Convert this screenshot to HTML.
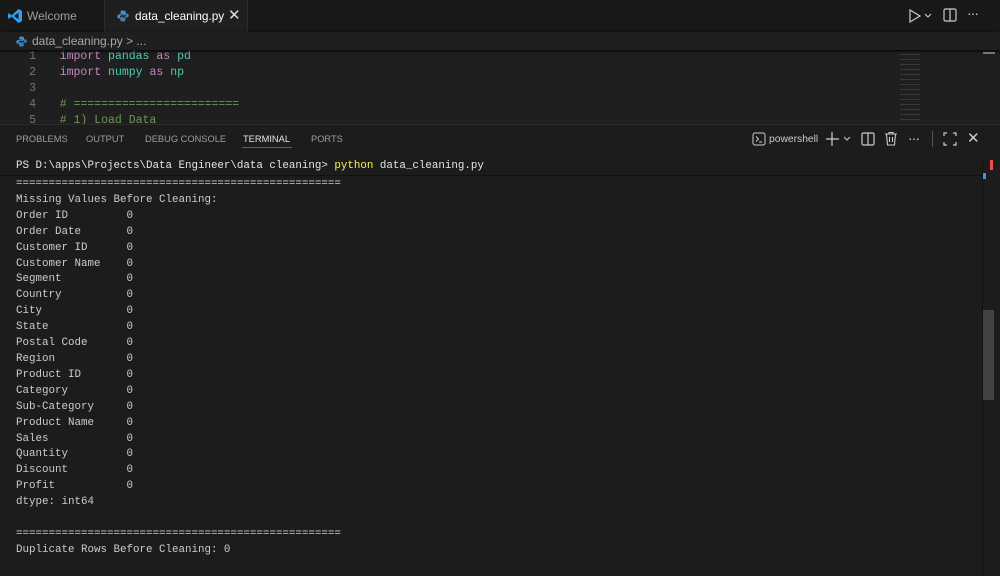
<!DOCTYPE html>
<html><head><style>
*{margin:0;padding:0;box-sizing:border-box}
body{width:1000px;height:576px;background:#1f1f1f;overflow:hidden;position:relative;font-family:"Liberation Sans",sans-serif;color:#ccc}
.abs{position:absolute}
.mono{font-family:"Liberation Mono",monospace;white-space:pre}
.pt{position:absolute;top:134px;font-size:9.3px;color:#9d9d9d}
.ln{display:inline-block;width:36px;text-align:right;margin-right:3px}
</style></head><body>
<!-- tab bar -->
<div class="abs" style="left:0;top:0;width:1000px;height:33px;background:#181818;border-bottom:1px solid #2b2b2b"></div>
<div class="abs" style="left:0;top:0;width:105px;height:33px;border-right:1px solid #2b2b2b"></div>
<svg class="abs" style="left:7px;top:8px" width="16" height="16" viewBox="0 0 16 16"><path d="M11.5 1 L15 2.7 V13.3 L11.5 15 L4.5 8.6 L1.8 10.7 L1 10.2 V5.8 L1.8 5.3 L4.5 7.4 Z M11.5 4.6 L7 8 L11.5 11.4 Z" fill="#2f9ef0"/></svg>
<div class="abs" style="left:27px;top:9px;font-size:12px;color:#9d9d9d">Welcome</div>
<div class="abs" style="left:105px;top:0;width:143px;height:34px;background:#1f1f1f;border-right:1px solid #2b2b2b"></div>
<svg class="abs" style="left:117px;top:10px" width="12" height="12" viewBox="0 0 12 12"><path d="M6 0.5C3.5 0.5 3.5 1.6 3.5 2.5V4H6.5V4.5H2C0.8 4.5 0.3 5.5 0.3 6.5 0.3 7.8 1 8.5 2 8.5H3V7C3 6 3.8 5.3 4.8 5.3H7.5C8.2 5.3 8.8 4.7 8.8 4V2.5C8.8 1.3 7.8 0.5 6 0.5Z" fill="#4a8fc7"/><path d="M6 11.5C8.5 11.5 8.5 10.4 8.5 9.5V8H5.5V7.5H10C11.2 7.5 11.7 6.5 11.7 5.5 11.7 4.2 11 3.5 10 3.5H9V5C9 6 8.2 6.7 7.2 6.7H4.5C3.8 6.7 3.2 7.3 3.2 8V9.5C3.2 10.7 4.2 11.5 6 11.5Z" fill="#4a8fc7" opacity=".85"/></svg>
<div class="abs" style="left:135px;top:9px;font-size:11.8px;color:#fff">data_cleaning.py</div>
<div class="abs" style="left:228px;top:6px;font-size:15px;color:#ddd">✕</div>
<svg class="abs" style="left:907px;top:8px" width="30" height="16" viewBox="0 0 30 16"><path d="M3 2 L13 8 L3 14 Z" fill="none" stroke="#ccc" stroke-width="1.2"/><path d="M18 6 L21 9 L24 6" fill="none" stroke="#ccc" stroke-width="1.1"/></svg>
<svg class="abs" style="left:943px;top:8px" width="14" height="14" viewBox="0 0 14 14"><rect x="1" y="1" width="12" height="12" rx="1.5" fill="none" stroke="#ccc" stroke-width="1.2"/><path d="M7 1V13" stroke="#ccc" stroke-width="1.2"/></svg>
<div class="abs" style="left:967px;top:5px;font-size:14px;color:#ccc;letter-spacing:-1px">···</div>
<!-- code -->
<div class="abs mono" style="left:0;top:49px;font-size:11.5px;line-height:16px;color:#6e7681;height:75px;overflow:hidden"><div><span class="ln">1</span>   <span style="color:#c586c0">import</span> <span style="color:#4ec9b0">pandas</span> <span style="color:#c586c0">as</span> <span style="color:#4ec9b0">pd</span></div><div><span class="ln">2</span>   <span style="color:#c586c0">import</span> <span style="color:#4ec9b0">numpy</span> <span style="color:#c586c0">as</span> <span style="color:#4ec9b0">np</span></div><div><span class="ln">3</span></div><div><span class="ln">4</span>   <span style="color:#6a9955"># ========================</span></div><div><span class="ln">5</span>   <span style="color:#6a9955"># 1) Load Data</span></div></div>
<div class="abs" style="left:0;top:32px;width:1000px;height:18px;background:#1f1f1f;box-shadow:0 1px 3px #000"></div>
<svg class="abs" style="left:16px;top:36px" width="11" height="11" viewBox="0 0 12 12"><path d="M6 0.5C3.5 0.5 3.5 1.6 3.5 2.5V4H6.5V4.5H2C0.8 4.5 0.3 5.5 0.3 6.5 0.3 7.8 1 8.5 2 8.5H3V7C3 6 3.8 5.3 4.8 5.3H7.5C8.2 5.3 8.8 4.7 8.8 4V2.5C8.8 1.3 7.8 0.5 6 0.5Z" fill="#4a8fc7"/><path d="M6 11.5C8.5 11.5 8.5 10.4 8.5 9.5V8H5.5V7.5H10C11.2 7.5 11.7 6.5 11.7 5.5 11.7 4.2 11 3.5 10 3.5H9V5C9 6 8.2 6.7 7.2 6.7H4.5C3.8 6.7 3.2 7.3 3.2 8V9.5C3.2 10.7 4.2 11.5 6 11.5Z" fill="#4a8fc7" opacity=".85"/></svg>
<div class="abs" style="left:32px;top:34px;font-size:12px;color:#a9a9a9">data_cleaning.py &gt; ...</div>
<!-- minimap -->
<div class="abs" style="left:900px;top:52px;width:20px;height:71px;opacity:.5;background:repeating-linear-gradient(#1f1f1f 0 2px,#4a5a4a 2px 3px,#1f1f1f 3px 5px)"></div>
<div class="abs" style="left:983px;top:52px;width:12px;height:2px;background:#777"></div>
<!-- panel -->
<div class="abs" style="left:0;top:124px;width:1000px;height:452px;background:#1c1c1c;border-top:1px solid #2b2b2b"></div>
<div class="pt" style="left:16px">PROBLEMS</div>
<div class="pt" style="left:86px">OUTPUT</div>
<div class="pt" style="left:145px">DEBUG CONSOLE</div>
<div class="pt" style="left:243px;color:#e7e7e7">TERMINAL</div>
<div class="abs" style="left:242px;top:147px;width:50px;height:1px;background:#0078d4"></div>
<div class="pt" style="left:311px">PORTS</div>
<svg class="abs" style="left:752px;top:132px" width="14" height="14" viewBox="0 0 14 14"><rect x="1" y="1" width="12" height="12" rx="2" fill="none" stroke="#ccc"/><path d="M4 4.5L6.5 7L4 9.5M7 10H10" fill="none" stroke="#ccc"/></svg>
<div class="abs" style="left:769px;top:134px;font-size:10.3px;color:#ccc">powershell</div>
<svg class="abs" style="left:826px;top:131px" width="28" height="16" viewBox="0 0 28 16"><path d="M6 1V15M-1 8H13" stroke="#ccc" stroke-width="1.2"/><path d="M18 6L21 9L24 6" fill="none" stroke="#ccc"/></svg>
<svg class="abs" style="left:861px;top:132px" width="14" height="14" viewBox="0 0 14 14"><rect x="1" y="1" width="12" height="12" rx="1.5" fill="none" stroke="#ccc" stroke-width="1.2"/><path d="M7 1V13" stroke="#ccc" stroke-width="1.2"/></svg>
<svg class="abs" style="left:884px;top:131px" width="14" height="15" viewBox="0 0 14 15"><path d="M1 3H13M5 3V1.5H9V3M2.5 3L3.5 14H10.5L11.5 3M5.5 6V11M8.5 6V11" fill="none" stroke="#ccc" stroke-width="1.1"/></svg>
<div class="abs" style="left:908px;top:130px;font-size:14px;color:#ccc;letter-spacing:-1px">···</div>
<div class="abs" style="left:932px;top:131px;width:1px;height:16px;background:#555"></div>
<svg class="abs" style="left:943px;top:132px" width="14" height="14" viewBox="0 0 14 14"><path d="M1 4V1H4M10 1H13V4M13 10V13H10M4 13H1V10" fill="none" stroke="#ccc" stroke-width="1.2"/></svg>
<div class="abs" style="left:967px;top:129px;font-size:15px;color:#ccc">✕</div>
<!-- terminal -->
<div class="abs mono" style="left:16px;top:158px;font-size:10.83px;line-height:16px;color:#e5e5e5">PS D:\apps\Projects\Data Engineer\data cleaning&gt; <span style="color:#f5f543">python</span> data_cleaning.py</div>
<div class="abs" style="left:0;top:175px;width:982px;height:1px;background:#111"></div>
<div class="abs mono" style="left:16px;top:177px;font-size:10.83px;line-height:15.9px;color:#cccccc">==================================================
Missing Values Before Cleaning:
Order ID         0
Order Date       0
Customer ID      0
Customer Name    0
Segment          0
Country          0
City             0
State            0
Postal Code      0
Region           0
Product ID       0
Category         0
Sub-Category     0
Product Name     0
Sales            0
Quantity         0
Discount         0
Profit           0
dtype: int64

==================================================
Duplicate Rows Before Cleaning: 0</div>
<!-- scrollbar -->
<div class="abs" style="left:982px;top:158px;width:1px;height:418px;background:#111"></div>
<div class="abs" style="left:983px;top:310px;width:11px;height:90px;background:#424242"></div>
<div class="abs" style="left:983px;top:173px;width:3px;height:6px;background:#3794ff"></div>
<div class="abs" style="left:990px;top:160px;width:3px;height:10px;background:#f14c4c"></div>
</body></html>
